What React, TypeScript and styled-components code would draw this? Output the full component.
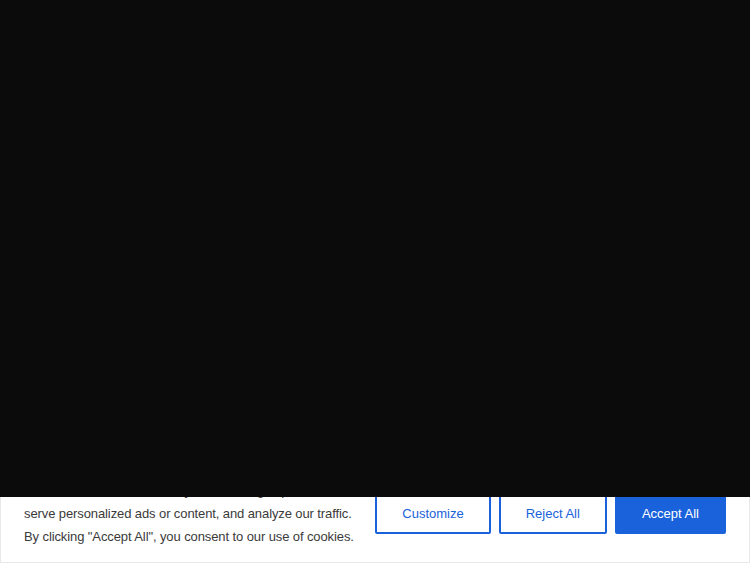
import React from "react";
import styled, { createGlobalStyle } from "styled-components";

const GlobalStyle = createGlobalStyle`
  html, body {
    margin: 0;
    padding: 0;
    background: #ffffff;
    font-family: "Liberation Sans", Arial, sans-serif;
  }
`;

const Page = styled.div`
  min-height: 563px;
`;

// dark video/hero layer that sits on top of the cookie bar
const Backdrop = styled.div`
  position: fixed;
  top: 0;
  left: 0;
  right: 0;
  height: 497px;
  background: #0b0b0b;
  z-index: 20;
`;

const CookieBar = styled.div`
  position: fixed;
  left: 0;
  right: 0;
  bottom: 0;
  z-index: 10;
  background: #ffffff;
  border: 1px solid #e8e8e8;
  padding: 14px 23px 14px 23px;
  display: flex;
  align-items: center;
  justify-content: space-between;
  gap: 16px;
`;

const Message = styled.p`
  margin: 0;
  font-size: 13px;
  line-height: 23px;
  color: #3a3a3a;
  white-space: nowrap;
  letter-spacing: -0.1px;
`;

const Actions = styled.div`
  display: flex;
  gap: 8px;
  flex-shrink: 0;
`;

const Button = styled.button<{ $primary?: boolean }>`
  height: 40px;
  padding: 0 25px;
  font-family: "Liberation Sans", Arial, sans-serif;
  font-size: 13px;
  border: 2px solid #1a62db;
  border-radius: 2px;
  background: ${(p) => (p.$primary ? "#1a62db" : "#ffffff")};
  color: ${(p) => (p.$primary ? "#ffffff" : "#1a62db")};
  cursor: pointer;
`;

export default function App() {
  return (
    <Page>
      <GlobalStyle />
      <Backdrop />
      <CookieBar>
        <Message>
          We use cookies to enhance your browsing experience,
          <br />
          serve personalized ads or content, and analyze our traffic.
          <br />
          By clicking "Accept All", you consent to our use of cookies.
        </Message>
        <Actions>
          <Button>Customize</Button>
          <Button>Reject All</Button>
          <Button $primary>Accept All</Button>
        </Actions>
      </CookieBar>
    </Page>
  );
}
